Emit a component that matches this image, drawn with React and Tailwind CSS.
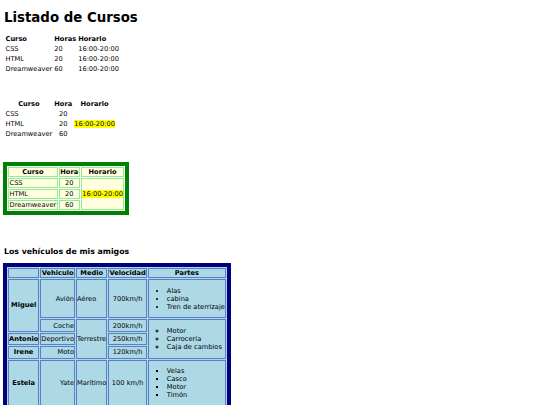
import React from "react";

const cursos = [
  { curso: "CSS", horas: "20" },
  { curso: "HTML", horas: "20" },
  { curso: "Dreamweaver", horas: "60" },
];

function PlainTable() {
  return (
    <table className="border-separate border-spacing-[1px]">
      <tbody>
        <tr>
          <th className="p-[0.5px] text-left font-bold">Curso</th>
          <th className="p-[0.5px] text-left font-bold">Horas</th>
          <th className="p-[0.5px] text-left font-bold">Horario</th>
        </tr>
        {cursos.map((c) => (
          <tr key={c.curso}>
            <td className="p-[0.5px]">{c.curso}</td>
            <td className="p-[0.5px]">{c.horas}</td>
            <td className="p-[0.5px]">16:00-20:00</td>
          </tr>
        ))}
      </tbody>
    </table>
  );
}

function SpanTable() {
  return (
    <table className="mt-[24.4px] border-separate border-spacing-[1px]">
      <tbody>
        <tr>
          <th className="p-[0.5px] text-center font-bold">Curso</th>
          <th className="p-[0.5px] text-center font-bold">Hora</th>
          <th className="p-[0.5px] text-center font-bold">Horario</th>
        </tr>
        {cursos.map((c, i) => (
          <tr key={c.curso}>
            <td className="p-[0.5px]">{c.curso}</td>
            <td className="p-[0.5px] text-center">{c.horas}</td>
            {i === 0 && (
              <td rowSpan={3} className="p-[0.5px] align-middle">
                <span className="bg-[#ffff00]">16:00-20:00</span>
              </td>
            )}
          </tr>
        ))}
      </tbody>
    </table>
  );
}

function GreenTable() {
  const cell = "border border-[#90ee90] bg-[#ffffe0] px-[0.5px] py-0";
  return (
    <table className="mt-[22.4px] -ml-[1px] border-separate border-spacing-[1px] border-[4px] border-solid border-[#008000] bg-white">
      <tbody>
        <tr>
          <th className={`${cell} text-center font-bold`}>Curso</th>
          <th className={`${cell} text-center font-bold`}>Hora</th>
          <th className={`${cell} text-center font-bold`}>Horario</th>
        </tr>
        {cursos.map((c, i) => (
          <tr key={c.curso}>
            <td className={cell}>{c.curso}</td>
            <td className={`${cell} text-center`}>{c.horas}</td>
            {i === 0 && (
              <td rowSpan={3} className={`${cell} align-middle`}>
                <span className="bg-[#ffff00]">16:00-20:00</span>
              </td>
            )}
          </tr>
        ))}
      </tbody>
    </table>
  );
}

function VehiculosTable() {
  const cell = "border border-[#5b7fc7] bg-[#add8e6] p-0 text-black";
  const th = `${cell} text-center font-bold`;
  const ul = "my-[6.67px] pl-[18px]";
  return (
    <table className="-ml-[1px] border-separate border-spacing-[1px] border-[4px] border-solid border-[#000080] bg-[#add8e6]">
      <tbody>
        <tr>
          <th className={th}></th>
          <th className={th}>Vehiculo</th>
          <th className={th}>Medio</th>
          <th className={th}>Velocidad</th>
          <th className={th}>Partes</th>
        </tr>
        <tr>
          <th rowSpan={2} className={th}>Miguel</th>
          <td className={`${cell} text-right`}>Avión</td>
          <td className={cell}>Aéreo</td>
          <td className={`${cell} text-center`}>700km/h</td>
          <td className={cell}>
            <ul className={`${ul} list-disc`}>
              <li>Alas</li>
              <li>cabina</li>
              <li>Tren de aterrizaje</li>
            </ul>
          </td>
        </tr>
        <tr>
          <td className={`${cell} text-right`}>Coche</td>
          <td rowSpan={3} className={cell}>Terrestre</td>
          <td className={`${cell} text-center`}>200km/h</td>
          <td rowSpan={3} className={cell}>
            <ul className={`${ul} list-[circle]`}>
              <li>Motor</li>
              <li>Carrocería</li>
              <li>Caja de cambios</li>
            </ul>
          </td>
        </tr>
        <tr>
          <th className={th}>Antonio</th>
          <td className={`${cell} text-right`}>Deportivo</td>
          <td className={`${cell} text-center`}>250km/h</td>
        </tr>
        <tr>
          <th className={th}>Irene</th>
          <td className={`${cell} text-right`}>Moto</td>
          <td className={`${cell} text-center`}>120km/h</td>
        </tr>
        <tr>
          <th className={th}>Estela</th>
          <td className={`${cell} text-right`}>Yate</td>
          <td className={cell}>Marítimo</td>
          <td className={`${cell} text-center`}>100 km/h</td>
          <td className={cell}>
            <ul className={`${ul} list-[square]`}>
              <li>Velas</li>
              <li>Casco</li>
              <li>Motor</li>
              <li>Timón</li>
            </ul>
          </td>
        </tr>
      </tbody>
    </table>
  );
}

export default function App() {
  return (
    <div className="min-h-[405px] bg-white px-[4px] pt-[9.6px] pb-[20px] font-['DejaVu_Sans',Verdana,sans-serif] text-[6.67px] leading-[normal] text-black">
      <h1 className="mb-[8.93px] text-[13.33px] font-bold leading-[normal]">Listado de Cursos</h1>
      <PlainTable />
      <SpanTable />
      <GreenTable />
      <h3 className="mt-[31.4px] mb-[7.4px] text-[7.8px] font-bold leading-[normal]">Los vehículos de mis amigos</h3>
      <VehiculosTable />
    </div>
  );
}
